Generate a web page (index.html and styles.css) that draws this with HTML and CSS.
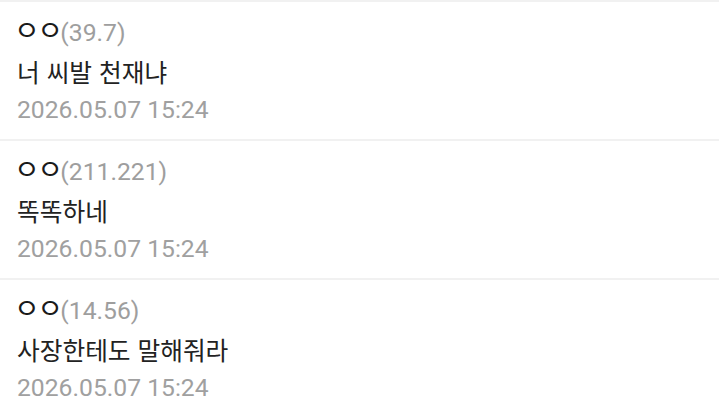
FILE: index.html
```html
<!DOCTYPE html>
<html lang="ko">
<head>
<meta charset="utf-8">
<link rel="stylesheet" href="styles.css">
</head>
<body>
<ul class="comments">
  <li class="comment">
    <div class="meta"><span class="nick">ㅇㅇ</span><span class="ip">(39.7)</span></div>
    <div class="text">너 씨발 천재냐</div>
    <div class="date">2026.05.07 15:24</div>
  </li>
  <li class="comment">
    <div class="meta"><span class="nick">ㅇㅇ</span><span class="ip">(211.221)</span></div>
    <div class="text">똑똑하네</div>
    <div class="date">2026.05.07 15:24</div>
  </li>
  <li class="comment">
    <div class="meta"><span class="nick">ㅇㅇ</span><span class="ip">(14.56)</span></div>
    <div class="text">사장한테도 말해줘라</div>
    <div class="date">2026.05.07 15:24</div>
  </li>
</ul>
</body>
</html>
```
FILE: styles.css
```css
html, body {
  margin: 0;
  padding: 0;
  background: #ffffff;
}
body {
  font-family: Roboto, "Noto Sans CJK KR", sans-serif;
  font-size: 24.7px;
  color: #222222;
}
.comments {
  list-style: none;
  margin: 0;
  padding: 0;
}
.comment {
  border-top: 2px solid #f1f1f1;
  padding: 12px 17px 0 17px;
  height: 125px;
  box-sizing: content-box;
}
.meta, .text, .date {
  height: 30px;
  line-height: 30px;
  white-space: nowrap;
}
.nick {
  font-family: "Noto Sans CJK KR", sans-serif;
  font-size: 28px;
  letter-spacing: -2.6px;
  margin-left: -3px;
  color: #1a1a1a;
}
.ip {
  color: #9e9e9e;
}
.text {
  margin-top: 12px;
  font-family: "Noto Sans CJK KR", sans-serif;
  color: #222222;
}
.date {
  margin-top: 9px;
  color: #a0a0a0;
}
```
